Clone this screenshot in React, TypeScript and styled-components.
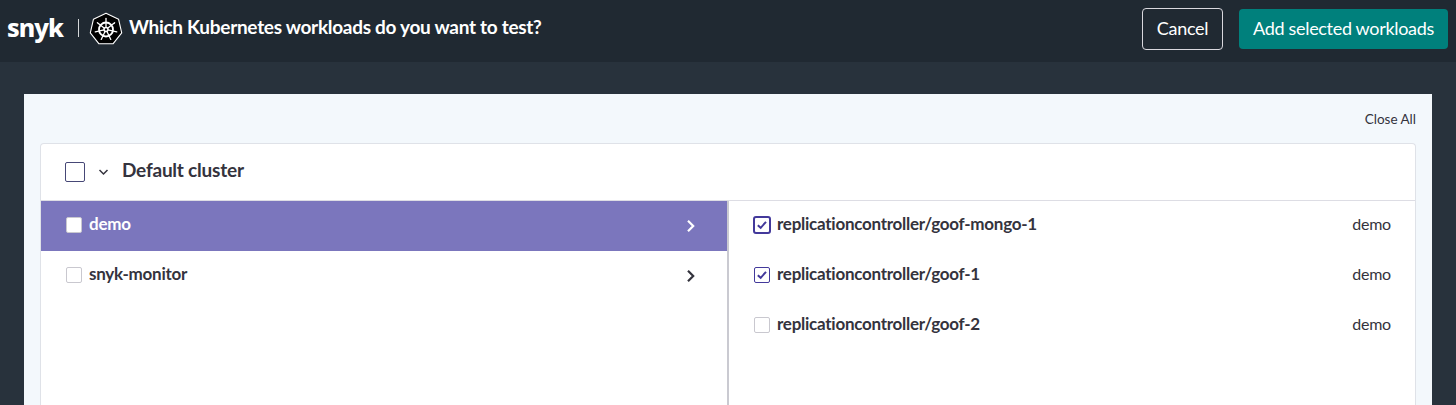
import React from "react";
import styled, { createGlobalStyle, css } from "styled-components";

const GlobalStyle = createGlobalStyle`
  *, *::before, *::after { box-sizing: border-box; }
  html, body { margin: 0; height: 100%; overflow: hidden; }
  body {
    background: #28323c;
    color: #34333d;
    font-family: Lato, "Open Sans", sans-serif;
  }
  #root { height: 100%; }
`;

const Page = styled.div`
  display: flex;
  flex-direction: column;
  height: 100vh;
  overflow: hidden;
`;

const TopBar = styled.header`
  display: flex;
  align-items: flex-start;
  flex: none;
  height: 62px;
  padding: 8px 8px 0 7px;
  background: #202932;
  color: #fff;
`;

const Brand = styled.div`
  width: 58px;
  margin-top: 3px;
  font-family: "Noto Sans", "Open Sans", sans-serif;
  font-size: 25px;
  font-weight: 800;
  letter-spacing: -1px;
  line-height: 32px;
  white-space: nowrap;
`;

const Separator = styled.div`
  width: 1px;
  height: 18px;
  margin: 11px 10px 0 13px;
  background: #d5d8da;
`;

const Title = styled.h1`
  margin: 7px 0 0 6px;
  font-size: 19px;
  font-weight: 700;
  line-height: 24px;
  letter-spacing: -0.29px;
  white-space: nowrap;
`;

const Actions = styled.div`
  display: flex;
  align-items: center;
  gap: 16px;
  margin-left: auto;
`;

const Button = styled.button<{ $primary?: boolean }>`
  width: ${(p) => (p.$primary ? 209 : 81)}px;
  height: ${(p) => (p.$primary ? 40 : 42)}px;
  padding: 0 0 2px;
  border: ${(p) => (p.$primary ? "0" : "1px solid #d9d8de")};
  border-radius: 4px;
  background: ${(p) => (p.$primary ? "#00807c" : "transparent")};
  color: #fff;
  font-family: inherit;
  font-size: 18px;
  letter-spacing: -0.32px;
  white-space: nowrap;
`;

const Panel = styled.main`
  display: flex;
  flex-direction: column;
  flex: 1;
  margin: 32px 24px 0;
  padding: 0 16px;
  background: #f3f8fc;
`;

const PanelTools = styled.div`
  display: flex;
  justify-content: flex-end;
  flex: none;
  height: 49px;
  padding-top: 15px;
  font-size: 13.5px;
  line-height: 20px;
`;

const ClusterCard = styled.section`
  display: flex;
  flex-direction: column;
  flex: 1;
  border: 1px solid #dfe2e8;
  border-bottom: 0;
  border-radius: 4px 4px 0 0;
  background: #fff;
`;

const ClusterHeader = styled.div`
  display: flex;
  align-items: center;
  flex: none;
  height: 57px;
  padding-left: 24px;
  border-bottom: 1px solid #dddde4;
`;

const ClusterName = styled.h2`
  margin: 0 0 4px 12px;
  font-size: 19px;
  font-weight: 700;
  line-height: 24px;
  letter-spacing: -0.22px;
`;

const Columns = styled.div`
  display: flex;
  flex: 1;
`;

const NamespaceList = styled.div`
  width: 688px;
  border-right: 2px solid #cacad1;
`;

const WorkloadList = styled.div`
  flex: 1;
`;

const Row = styled.div<{ $selected?: boolean }>`
  display: flex;
  align-items: center;
  height: 50px;
  padding: 0 24px 2px;
  background: ${(p) => (p.$selected ? "#7b76bd" : "transparent")};
  color: ${(p) => (p.$selected ? "#fff" : "#34333d")};
`;

const RowName = styled.span`
  flex: 1;
  margin: 0 0 2px 6px;
  font-size: 17px;
  font-weight: 700;
  line-height: 24px;
  letter-spacing: -0.26px;
`;

const RowNamespace = styled.span`
  margin-bottom: 2px;
  font-size: 16px;
  line-height: 24px;
  letter-spacing: -0.2px;
`;

const Box = styled.span<{ $state?: "on" | "focus"; $large?: boolean }>`
  display: flex;
  align-items: center;
  justify-content: center;
  flex: none;
  width: 16px;
  height: 16px;
  margin: 0 1px;
  border: 1px solid #c9c8cf;
  border-radius: 2px;
  background: #fff;
  ${(p) => p.$state === "on" && css`border-color: #43399b;`}
  ${(p) =>
    p.$state === "focus" &&
    css`
      width: 18px;
      height: 18px;
      margin: 0;
      border: 2px solid #43399b;
      border-radius: 3px;
    `}
  ${(p) =>
    p.$large &&
    css`
      width: 20px;
      height: 20px;
      margin: 0;
      border-color: #464776;
    `}
`;

const ChevronRight = styled.svg`
  flex: none;
  margin: 2px 7px 0 0;
`;

const ChevronDown = styled.svg`
  flex: none;
  margin: 0 0 0 13px;
`;

const Wheel = styled.svg`
  flex: none;
  margin-top: 4px;
`;

const point = (radius: number, step: number, cx = 17, cy = 17): [number, number] => {
  const a = (step * 2 * Math.PI) / 7 - Math.PI / 2;
  return [cx + radius * Math.cos(a), cy + radius * Math.sin(a)];
};
const steps = [0, 1, 2, 3, 4, 5, 6];

const KubernetesLogo = () => (
  <Wheel width="34" height="34" viewBox="0 0 34 34" fill="none">
    <polygon
      points={steps.map((s) => point(16.1, s, 17, 17.3).map((n) => n.toFixed(2)).join(",")).join(" ")}
      fill="#000"
      stroke="#fff"
      strokeWidth="1.1"
      strokeLinejoin="round"
    />
    <circle cx="17" cy="17.5" r="7" stroke="#fff" strokeWidth="1.8" />
    {steps.map((s) => {
      const [x1, y1] = point(2, s, 17, 17.5);
      const [x2, y2] = point(11, s, 17, 17.5);
      return <line key={s} x1={x1} y1={y1} x2={x2} y2={y2} stroke="#fff" strokeWidth="1.3" strokeLinecap="round" />;
    })}
    <circle cx="17" cy="17.5" r="2" stroke="#fff" strokeWidth="1.4" />
  </Wheel>
);

const Checkbox = ({ state, large }: { state?: "on" | "focus"; large?: boolean }) => (
  <Box $state={state} $large={large}>
    {state && (
      <svg width="10" height="10" viewBox="0 0 10 10" fill="none">
        <path d="M0.8 5.2 3.7 7.8 9 1.9" stroke="#43399b" strokeWidth="2" />
      </svg>
    )}
  </Box>
);

const namespaces = [
  { name: "demo", selected: true },
  { name: "snyk-monitor", selected: false },
];

const workloads: { name: string; state?: "on" | "focus" }[] = [
  { name: "replicationcontroller/goof-mongo-1", state: "focus" },
  { name: "replicationcontroller/goof-1", state: "on" },
  { name: "replicationcontroller/goof-2" },
];

export default function App() {
  return (
    <Page>
      <GlobalStyle />
      <TopBar>
        <Brand>snyk</Brand>
        <Separator />
        <KubernetesLogo />
        <Title>Which Kubernetes workloads do you want to test?</Title>
        <Actions>
          <Button>Cancel</Button>
          <Button $primary>Add selected workloads</Button>
        </Actions>
      </TopBar>
      <Panel>
        <PanelTools>Close All</PanelTools>
        <ClusterCard>
          <ClusterHeader>
            <Checkbox large />
            <ChevronDown width="12" height="12" viewBox="0 0 12 12" fill="none">
              <path d="M1.5 4 5.5 8 9.5 4" stroke="#34333d" strokeWidth="1.5" />
            </ChevronDown>
            <ClusterName>Default cluster</ClusterName>
          </ClusterHeader>
          <Columns>
            <NamespaceList>
              {namespaces.map((n) => (
                <Row key={n.name} $selected={n.selected}>
                  <Checkbox />
                  <RowName>{n.name}</RowName>
                  <ChevronRight width="10" height="14" viewBox="0 0 10 14" fill="none">
                    <path d="M2 1.8 7.2 7 2 12.2" stroke="currentColor" strokeWidth="2.2" />
                  </ChevronRight>
                </Row>
              ))}
            </NamespaceList>
            <WorkloadList>
              {workloads.map((w) => (
                <Row key={w.name}>
                  <Checkbox state={w.state} />
                  <RowName>{w.name}</RowName>
                  <RowNamespace>demo</RowNamespace>
                </Row>
              ))}
            </WorkloadList>
          </Columns>
        </ClusterCard>
      </Panel>
    </Page>
  );
}
